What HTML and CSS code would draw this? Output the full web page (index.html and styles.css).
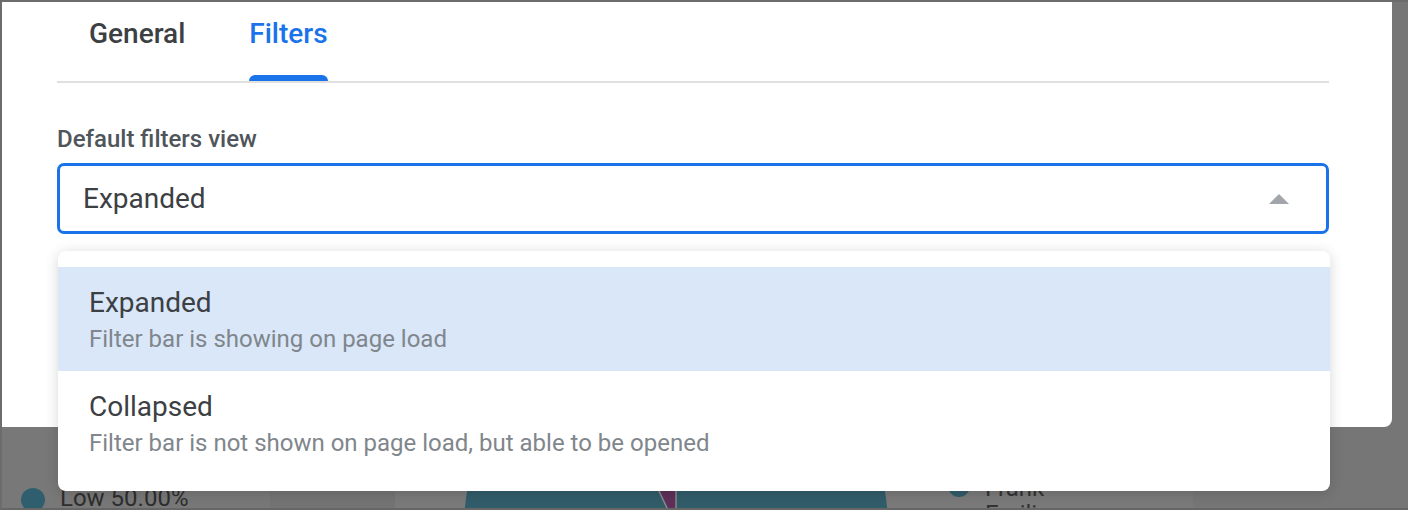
FILE: index.html
```html
<!DOCTYPE html>
<html lang="en">
<head>
<meta charset="utf-8">
<title>Filters settings</title>
<link rel="stylesheet" href="styles.css">
</head>
<body>
<div class="frame">
  <div class="dashboard">
    <div class="card card-a">
      <div class="legend-item">
        <span class="dot"></span>
        <span class="legend-text">Low 50.00%</span>
      </div>
    </div>
    <div class="card card-gap"></div>
    <div class="card card-b">
      <svg class="chart" width="798" height="506" viewBox="0 0 798 506" xmlns="http://www.w3.org/2000/svg">
        <circle cx="281" cy="525" r="212" fill="#315c69"/>
        <path d="M281 525 L281 313 A212 212 0 0 0 190.5 333.3 Z" fill="#5e2f5a"/>
        <line x1="281" y1="525" x2="281" y2="313" stroke="#8a8a8a" stroke-width="1.5"/>
        <line x1="281" y1="525" x2="190.5" y2="333.3" stroke="#8a8a8a" stroke-width="1.5"/>
        <circle cx="564" cy="484" r="11" fill="#315c69"/>
        <text x="590" y="494" font-family="Roboto, sans-serif" font-size="24" fill="#333">Frank</text>
        <text x="590" y="520" font-family="Roboto, sans-serif" font-size="24" fill="#333">Emilia</text>
      </svg>
    </div>
    <div class="card card-c"></div>
  </div>

  <div class="modal">
    <div class="tabs">
      <div class="tab"><span class="tab-label">General</span></div>
      <div class="tab tab-active"><span class="tab-label">Filters</span></div>
    </div>

    <div class="field">
      <div class="field-label">Default filters view</div>
      <div class="select">
        <span class="select-value">Expanded</span>
        <span class="caret"></span>
        <div class="menu">
          <div class="option option-selected">
            <div class="option-title">Expanded</div>
            <div class="option-desc">Filter bar is showing on page load</div>
          </div>
          <div class="option">
            <div class="option-title">Collapsed</div>
            <div class="option-desc">Filter bar is not shown on page load, but able to be opened</div>
          </div>
        </div>
      </div>
    </div>
  </div>
</div>
</body>
</html>
```
FILE: styles.css
```css
* {
  box-sizing: border-box;
}

html, body {
  margin: 0;
  padding: 0;
  background: #777777;
  font-family: Roboto, "Noto Sans", Arial, sans-serif;
}

.frame {
  position: relative;
  width: 1408px;
  height: 510px;
  overflow: hidden;
  border-top: 2px solid #6c6c6c;
  border-left: 2px solid #6c6c6c;
  border-bottom: 2px solid #666666;
  background: #777777;
}

/* dimmed dashboard underneath */
.dashboard {
  display: flex;
  height: 100%;
}

.card {
  height: 100%;
  flex: none;
}

.card-a {
  width: 268px;
  background: #787878;
  padding: 486px 0 0 19px;
}

.card-gap {
  width: 125px;
  background: #747474;
}

.card-b {
  width: 798px;
  background: #7a7a7a;
}

.card-c {
  flex: 1;
  background: #767676;
}

.chart {
  display: block;
}

.legend-item {
  display: flex;
  align-items: flex-start;
  gap: 15px;
}

.dot {
  width: 24px;
  height: 24px;
  border-radius: 50%;
  background: #2f5e6e;
  flex: none;
}

.legend-text {
  font-size: 24px;
  line-height: 24px;
  color: #2e2e2e;
  margin-top: -2px;
}

/* modal */
.modal {
  position: absolute;
  top: 0;
  left: -8px;
  width: 1398px;
  height: 425px;
  background: #ffffff;
  border-radius: 0 0 8px 8px;
  padding: 0 63px;
}

.tabs {
  display: flex;
  gap: 64px;
  padding-left: 32px;
  border-bottom: 2px solid #e0e0e0;
}

.tab {
  padding: 15px 0 30px;
  font-size: 28px;
  line-height: 34px;
  font-weight: 500;
  color: #3c4043;
  position: relative;
}

.tab-active {
  color: #1a73e8;
}

.tab-active::after {
  content: "";
  position: absolute;
  left: 0;
  right: 0;
  bottom: 0;
  height: 6px;
  background: #1a73e8;
  border-radius: 6px 6px 0 0;
}

.field {
  padding-top: 44px;
}

.field-label {
  font-size: 24px;
  line-height: 24px;
  font-weight: 500;
  color: #4f555a;
  margin-bottom: 12px;
}

.select {
  position: relative;
  height: 71px;
  border: 3px solid #1a73e8;
  border-radius: 7px;
  display: flex;
  align-items: center;
  justify-content: space-between;
  padding: 0 37px 0 23px;
}

.select-value {
  font-size: 28px;
  line-height: 34px;
  color: #3c4043;
  padding-top: 1px;
}

.caret {
  width: 0;
  height: 0;
  border-left: 10px solid transparent;
  border-right: 10px solid transparent;
  border-bottom: 10px solid #a2a5a9;
  margin-top: 1px;
}

.menu {
  position: absolute;
  top: calc(100% + 20px);
  left: -2px;
  right: -4px;
  background: #ffffff;
  border-radius: 8px;
  padding: 16px 0;
  box-shadow: 0 2px 14px rgba(0, 0, 0, 0.16);
}

.option {
  padding: 19px 31px 15px;
}

.option-selected {
  background: #d9e7f9;
}

.option-title {
  font-size: 28px;
  line-height: 34px;
  color: #3c4043;
}

.option-desc {
  font-size: 24px;
  line-height: 34px;
  color: #80868b;
  margin-top: 2px;
}
```
